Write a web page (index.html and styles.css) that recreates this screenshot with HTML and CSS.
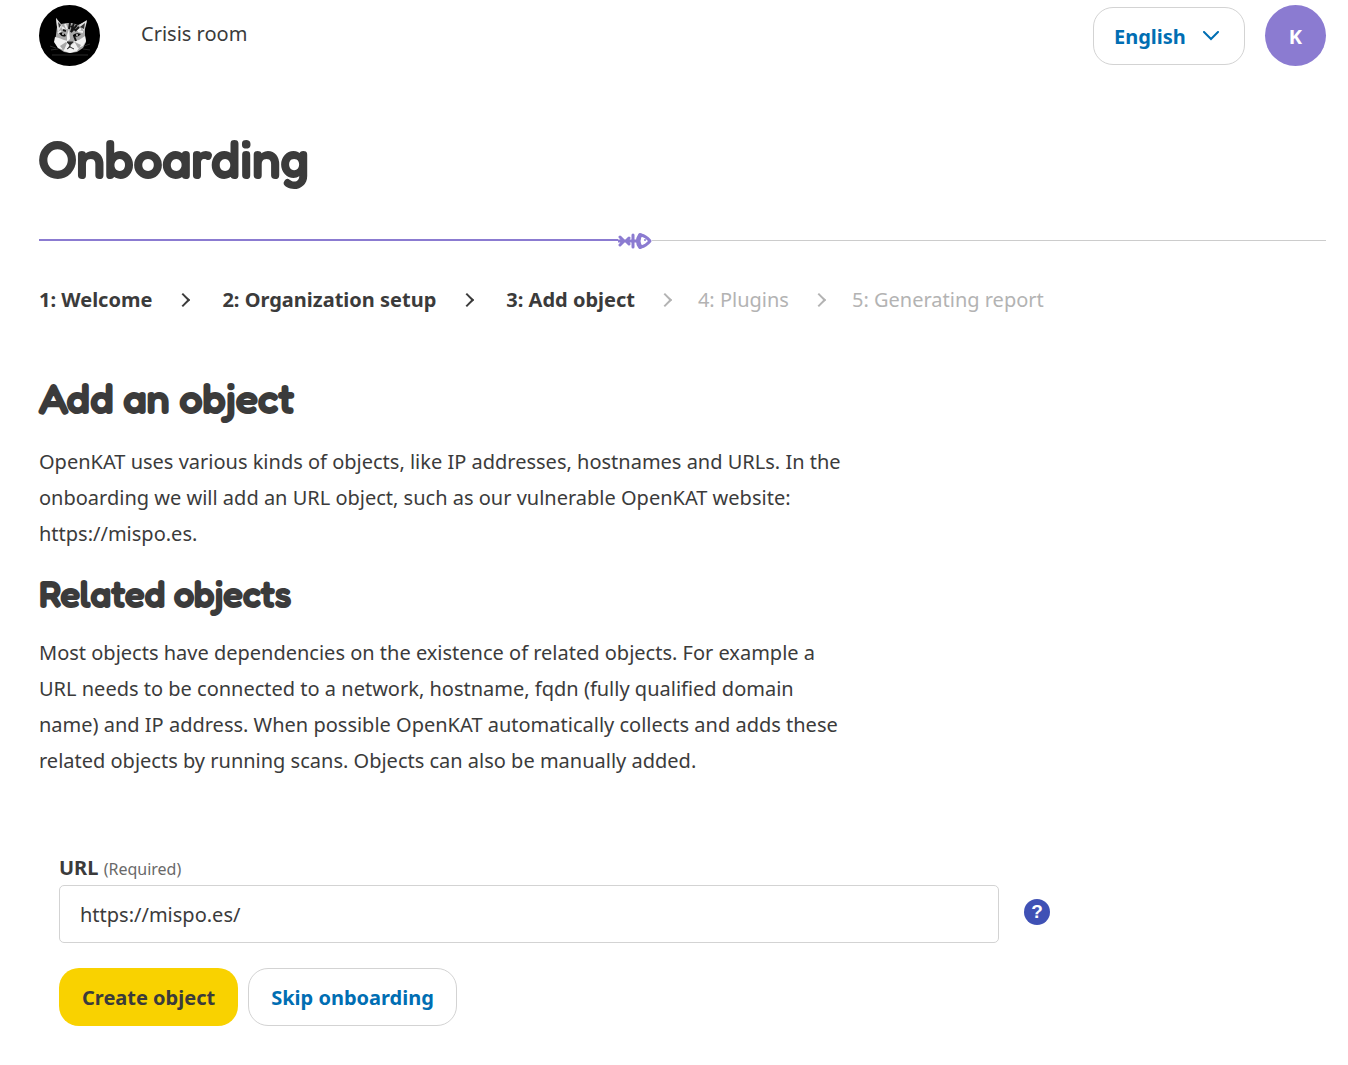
FILE: index.html
```html
<!DOCTYPE html>
<html lang="en">
<head>
<meta charset="utf-8">
<meta name="viewport" content="width=device-width, initial-scale=1">
<title>OpenKAT - Onboarding</title>
<link rel="stylesheet" href="styles.css">
</head>
<body>
<header class="site-header">
  <a class="logo" href="#" aria-label="OpenKAT">
    <svg viewBox="0 0 61 61" width="61" height="61" aria-hidden="true">
      <circle cx="30.500" cy="30.500" r="30.500" fill="#000"/>
      <path d="M17 13l1 9-1 8-1 7 3 6 6 4 6 1 7-1 6-4 3-6-1-7v-6l2-8-9 4-6-2h-5l-6 1z" fill="#a8a8a8"/>
      <path d="M17 13l1 9 1 5 4-6zM48 15l-8 5 5 6z" fill="#e2e2e2"/>
      <path d="M19 17l1 6 2-3zM46 18l-5 4 4 2z" fill="#333"/>
      <path d="M16 32l-1 5 4 6 6 2 4-9-4-1-5-2zM46 31l-6 4-5 1 4 7 5-2 3-5zM28 30l2-6 1 10-3 3zM21 41l6-4 4 4 5-4 6 3-4 6-7 2-6-2z" fill="#f2f2f2"/>
      <path d="M23 22l4 4M26 19l2 5M42 24l-5 1M19 28l3-2M44 27l-5-1" stroke="#eee" stroke-width="2" fill="none"/>
      <path d="M31 18l-1 6M35 18l-3 9 6-7M36 26l4-4M35 31l2 5M24 25l3 1M32 21l4 4" stroke="#151515" stroke-width="2" fill="none"/>
      <path d="M20 28q5-2 7 3-4 2-7-3zM34 30q3-3 8-1-3 4-8 2z" fill="#080808"/>
      <circle cx="24" cy="29" r="1" fill="#ccc"/><circle cx="38" cy="30" r="1" fill="#ccc"/>
      <path d="M28 37h6l-3 3zM31 40v2l-3 2M31 42l4 2" fill="#222" stroke="#333"/>
      <path d="M11 41l6 2M12 45l7-1M45 41l6-2M44 44l7 1M13 50h36" stroke="#2a2a2a" fill="none"/>
    </svg>
  </a>
  <nav class="main-nav"><a href="#">Crisis room</a></nav>
  <button class="button ghost language" type="button">English
    <svg viewBox="0 0 18 10" width="18" height="10" aria-hidden="true"><path d="M2 1l7 7 7-7" fill="none" stroke="currentColor" stroke-width="2" stroke-linecap="round"/></svg>
  </button>
  <button class="avatar" type="button" aria-label="Account K">K</button>
</header>
<main class="content">
  <h1>Onboarding</h1>
  <div class="progress">
    <span class="done"></span>
    <svg class="fish" viewBox="0 0 34 18" width="34" height="18" aria-hidden="true">
      <g fill="none" stroke="#8b7bd1" stroke-width="3" stroke-linecap="round" stroke-linejoin="round">
        <path d="M0 10h20M2 6l4 4-4 4M11 7l-3 3 3 3M15 4v12"/>
        <path d="M23 4q-4 6 0 12 5-1 9-6-4-5-9-6z"/>
      </g>
      <path d="M22 4q-4 6 0 12" fill="none" stroke="#8b7bd1" stroke-width="4" stroke-linecap="round"/>
      <circle cx="27" cy="9" r="1" fill="#8b7bd1"/>
    </svg>
    <span class="todo"></span>
  </div>
  <ol class="steps">
    <li>1: Welcome</li>
    <li>2: Organization setup</li>
    <li aria-current="step">3: Add object</li>
    <li class="upcoming">4: Plugins</li>
    <li class="upcoming">5: Generating report</li>
  </ol>
  <section class="intro">
    <h2>Add an object</h2>
    <p>OpenKAT uses various kinds of objects, like IP addresses, hostnames and URLs. In the onboarding we will add an URL object, such as our vulnerable OpenKAT website: https://mispo.es.</p>
    <h3>Related objects</h3>
    <p>Most objects have dependencies on the existence of related objects. For example a URL needs to be connected to a network, hostname, fqdn (fully qualified domain name) and IP address. When possible OpenKAT automatically collects and adds these related objects by running scans. Objects can also be manually added.</p>
  </section>
  <form class="object-form">
    <label for="url">URL <span>(Required)</span></label>
    <div class="field">
      <input id="url" type="text" value="https://mispo.es/" required>
      <button class="help" type="button" aria-label="Explain URL">?</button>
    </div>
    <div class="actions">
      <button class="button primary" type="submit">Create object</button>
      <a class="button ghost" href="#">Skip onboarding</a>
    </div>
  </form>
</main>
</body>
</html>
```
FILE: styles.css
```css
* {
  box-sizing: border-box;
}

body {
  margin: 0;
  background: #fff;
  color: #3b3b3b;
  font: 20px/36px "Noto Sans", "Open Sans", sans-serif;
}

h1, h2, h3, p, ol {
  margin: 0;
}

h1, h2, h3 {
  font-family: Fredoka, "Varela Round", Lato, sans-serif;
  font-weight: 500;
  -webkit-text-stroke: 2px currentColor;
}

.site-header {
  display: flex;
  align-items: center;
  padding: 5px 22px 0 39px;
}

.logo {
  display: flex;
  margin-right: 41px;
}

.main-nav {
  flex: 1;
  padding-bottom: 4px;
}

.main-nav a {
  color: inherit;
  text-decoration: none;
}

.button {
  display: inline-flex;
  align-items: center;
  justify-content: center;
  gap: 16px;
  height: 58px;
  padding: 2px 22px 0;
  border: 1px solid transparent;
  border-radius: 20px;
  font: bold 20px/28px "Noto Sans", "Open Sans", sans-serif;
  text-decoration: none;
}

.ghost {
  border-color: #d3d3d3;
  background: #fff;
  color: #006eb3;
}

.primary {
  background: #f9d200;
  color: #3b3b3b;
}

.language {
  justify-content: flex-start;
  width: 152px;
  padding: 2px 20px 0;
}

.language svg {
  margin-bottom: 2px;
}

.avatar {
  width: 61px;
  height: 61px;
  margin-left: 20px;
  padding: 2px 0 0;
  border: 0;
  border-radius: 50%;
  background: #8b7bd1;
  color: #fff;
  font: bold 20px/28px "Open Sans", "Noto Sans", sans-serif;
}

.content {
  padding: 62px 22px 39px 39px;
}

h1 {
  font-size: 51px;
  line-height: 60px;
}

.progress {
  display: flex;
  align-items: center;
  height: 18px;
  margin-top: 43px;
}

.done {
  width: 45%;
  height: 2px;
  background: #8b7bd1;
}

.todo {
  flex: 1;
  height: 1px;
  background: #ccc;
}

.steps {
  display: flex;
  margin-top: 33px;
  padding: 0;
  list-style: none;
  font-weight: bold;
}

.steps li {
  display: flex;
  align-items: center;
}

.steps li + li::before {
  width: 8px;
  height: 8px;
  margin: 0 34px 0 26px;
  border: solid currentColor;
  border-width: 2px 2px 0 0;
  content: "";
  transform: rotate(45deg);
}

.steps li.upcoming::before {
  margin: 0 28px 0 25px;
}

.steps .upcoming {
  color: #b3b3b3;
  font-weight: normal;
}

.intro {
  max-width: 812px;
  margin-top: 55px;
}

h2 {
  margin-bottom: 21px;
  font-size: 41px;
  line-height: 50px;
}

h3 {
  margin: 20px 0 19px;
  font-size: 36px;
  line-height: 44px;
}

.object-form {
  max-width: 1011px;
  margin-top: 73px;
  padding-left: 20px;
}

.object-form label {
  display: block;
  line-height: 32px;
  font-weight: bold;
}

.object-form label span {
  color: #696969;
  font-size: 16px;
  font-weight: normal;
}

.field {
  display: flex;
  align-items: center;
  gap: 25px;
}

.field input {
  flex: 1;
  height: 58px;
  padding: 0 20px;
  border: 1px solid #d3d3d3;
  border-radius: 5px;
  color: inherit;
  font: inherit;
}

.help {
  width: 26px;
  height: 26px;
  margin-bottom: 4px;
  padding: 0;
  border: 0;
  border-radius: 50%;
  background: #3f51b5;
  color: #fff;
  font: bold 19px/26px "Liberation Sans", Arial, sans-serif;
}

.actions {
  display: flex;
  flex-wrap: wrap;
  gap: 10px;
  margin-top: 25px;
}
```
